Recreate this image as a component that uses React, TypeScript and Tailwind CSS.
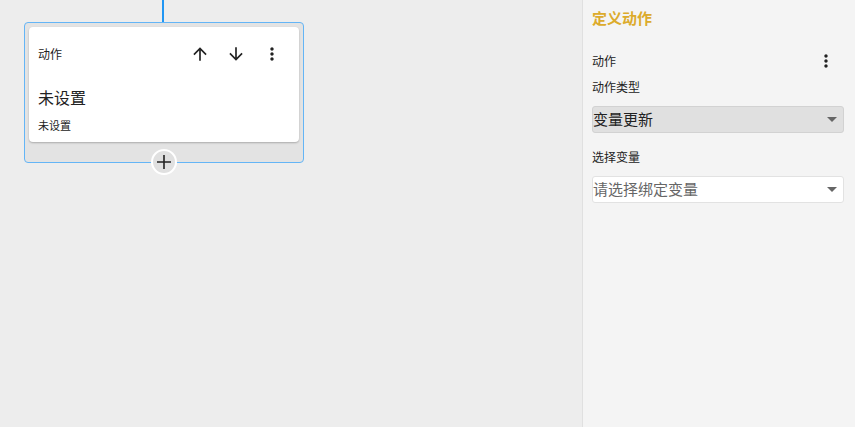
import React from 'react';

const font = { fontFamily: '"Noto Sans CJK SC", "Noto Sans", sans-serif' };

function ArrowUp() {
    return (
        <svg width="20" height="20" viewBox="0 0 24 24" fill="#222">
            <path d="M4 12l1.41 1.41L11 7.83V20h2V7.83l5.58 5.59L20 12l-8-8-8 8z" />
        </svg>
    );
}

function ArrowDown() {
    return (
        <svg width="20" height="20" viewBox="0 0 24 24" fill="#222">
            <path d="M20 12l-1.41-1.41L13 16.17V4h-2v12.17l-5.58-5.59L4 12l8 8 8-8z" />
        </svg>
    );
}

function Dots() {
    return (
        <svg width="20" height="20" viewBox="0 0 24 24" fill="#222">
            <path d="M12 8c1.1 0 2-.9 2-2s-.9-2-2-2-2 .9-2 2 .9 2 2 2zm0 2c-1.1 0-2 .9-2 2s.9 2 2 2 2-.9 2-2-.9-2-2-2zm0 6c-1.1 0-2 .9-2 2s.9 2 2 2 2-.9 2-2-.9-2-2-2z" />
        </svg>
    );
}

function Caret() {
    return <span className="w-0 h-0 border-l-[5px] border-r-[5px] border-t-[5px] border-l-transparent border-r-transparent border-t-[#666]" />;
}

export default function App() {
    return (
        <div className="w-[855px] h-[427px] flex bg-[#ededed] overflow-hidden" style={font}>
            {/* Canvas */}
            <div className="flex-1 relative">
                <div className="absolute left-[162px] top-0 w-[2px] h-[22px] bg-[#2196f3]" />
                <div className="absolute left-[24px] top-[22px] w-[280px] h-[141px] border border-[#64b5f6] rounded-[4px] bg-[#e3e3e3] p-[4px]">
                    <div className="bg-white rounded-[4px] shadow-[0_1px_2px_rgba(0,0,0,0.25)] h-[115px] pl-[9px] pr-[17px]">
                        <div className="flex items-center h-[54px]">
                            <span className="text-[12px] text-[#222] flex-1">动作</span>
                            <div className="flex items-center gap-[16px]">
                                <ArrowUp />
                                <ArrowDown />
                                <Dots />
                            </div>
                        </div>
                        <div className="text-[16px] text-[#222] leading-[20px] mt-[6px]">未设置</div>
                        <div className="text-[11px] text-[#222] leading-[14px] mt-[11px]">未设置</div>
                    </div>
                    <div className="absolute left-1/2 -translate-x-1/2 bottom-[-13px] w-[26px] h-[26px] rounded-full border-2 border-white bg-[#e0e0e0] flex items-center justify-center">
                        <svg width="16" height="16" viewBox="0 0 16 16" stroke="#222" strokeWidth="1.6">
                            <path d="M8 1v14M1 8h14" />
                        </svg>
                    </div>
                </div>
            </div>

            {/* Side panel */}
            <div className="w-[273px] bg-[#f4f4f4] border-l border-[#e0e0e0] pl-[9px] pr-[11px]">
                <div className="text-[15px] font-bold text-[#dcab2c] leading-[20px] mt-[8px]">定义动作</div>
                <div className="flex items-center justify-between mt-[23px] h-[20px]">
                    <span className="text-[12px] text-[#222]">动作</span>
                    <span className="mr-[8px]"><Dots /></span>
                </div>
                <div className="text-[12px] text-[#222] leading-[16px] mt-[8px]">动作类型</div>
                <div className="mt-[11px] h-[27px] bg-[#e0e0e0] border border-[#d2d2d2] rounded-[3px] flex items-center justify-between pr-[6px]">
                    <span className="text-[15px] text-[#222]">变量更新</span>
                    <Caret />
                </div>
                <div className="text-[12px] text-[#222] leading-[16px] mt-[16px]">选择变量</div>
                <div className="mt-[11px] h-[27px] bg-white border border-[#e2e2e2] rounded-[3px] flex items-center justify-between pr-[6px]">
                    <span className="text-[15px] text-[#666]">请选择绑定变量</span>
                    <Caret />
                </div>
            </div>
        </div>
    );
}
